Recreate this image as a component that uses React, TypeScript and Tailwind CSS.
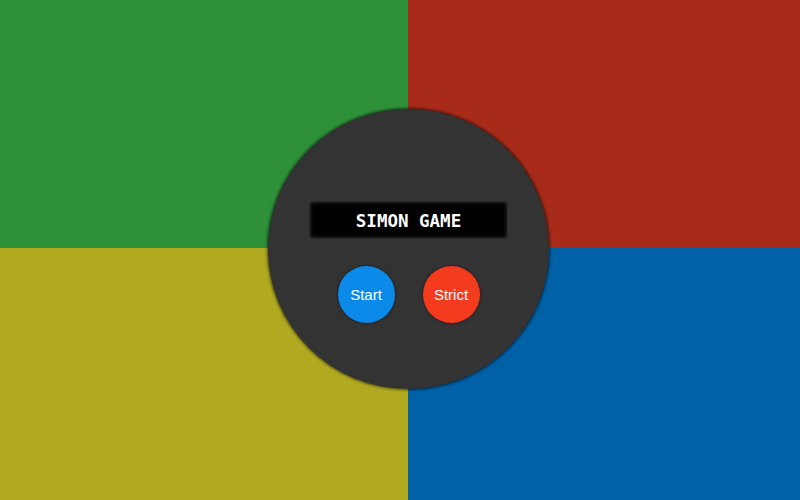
import React from "react";

export default function App() {
  return (
    <div className="relative w-[800px] h-[500px] overflow-hidden">
      <div className="grid grid-cols-[408px_392px] grid-rows-[248px_252px] w-full h-full">
        <div className="bg-[#2e9139]" />
        <div className="bg-[#a82a19]" />
        <div className="bg-[#b1aa21]" />
        <div className="bg-[#0061a6]" />
      </div>
      <div className="absolute left-[268px] top-[109px] w-[281px] h-[280px] rounded-full bg-[#333333] shadow-[0_0_3px_1px_rgba(0,0,0,0.6)] flex flex-col items-center">
        <div className="mt-[93px] w-[197px] h-[36px] bg-black rounded-[3px] shadow-[inset_0_0_4px_rgba(255,255,255,0.2),0_0_2px_rgba(0,0,0,0.6)] flex items-center justify-center pt-[4px]">
          <span
            className="text-white font-bold text-[17.5px] leading-none"
            style={{ fontFamily: '"DejaVu Sans Mono", "Liberation Mono", monospace' }}
          >
            SIMON GAME
          </span>
        </div>
        <div className="mt-[28px] flex gap-[28px]">
          <button
            className="w-[57px] h-[57px] rounded-full bg-[#0b8ae9] text-white text-[15px] shadow-[0_0_3px_rgba(0,0,0,0.6)] flex items-center justify-center pt-[1px]"
            style={{ fontFamily: '"Liberation Sans", Arial, sans-serif' }}
          >
            Start
          </button>
          <button
            className="w-[57px] h-[57px] rounded-full bg-[#f43b1e] text-white text-[15px] shadow-[0_0_3px_rgba(0,0,0,0.6)] flex items-center justify-center pt-[1px]"
            style={{ fontFamily: '"Liberation Sans", Arial, sans-serif' }}
          >
            Strict
          </button>
        </div>
      </div>
    </div>
  );
}
